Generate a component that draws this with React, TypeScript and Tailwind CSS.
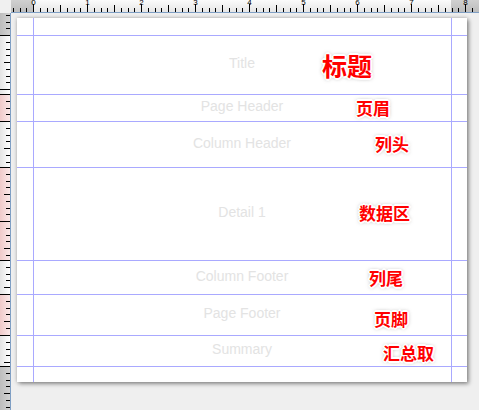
import React from "react";

const bands = [
  { name: "Title", h: 59 },
  { name: "Page Header", h: 27 },
  { name: "Column Header", h: 46 },
  { name: "Detail 1", h: 93 },
  { name: "Column Footer", h: 34 },
  { name: "Page Footer", h: 41 },
  { name: "Summary", h: 31 },
];

const notes = [
  { text: "标题", left: 322, top: 53, big: true },
  { text: "页眉", left: 356, top: 99 },
  { text: "列头", left: 375, top: 135 },
  { text: "数据区", left: 359, top: 204 },
  { text: "列尾", left: 369, top: 269 },
  { text: "页脚", left: 374, top: 310 },
  { text: "汇总取", left: 383, top: 344 },
];

const STEP = 6.75;

const TopRuler = () => {
  const ticks = [];
  for (let i = -3; i <= 66; i++) {
    const x = Math.round(33 + i * STEP) + 0.5;
    const y1 = i % 8 === 0 ? 4 : i % 4 === 0 ? 5 : 8;
    ticks.push(<line key={i} x1={x} x2={x} y1={y1} y2={12} stroke="#000" strokeWidth={1} />);
  }
  const nums = [0, 1, 2, 3, 4, 5, 6, 7, 8];
  return (
    <svg width={468} height={13} viewBox="11 0 468 13" className="block">
      <defs>
        <linearGradient id="rg" x1="0" y1="0" x2="0" y2="1">
          <stop offset="0" stopColor="#fbfbfb" />
          <stop offset="1" stopColor="#e6e6e6" />
        </linearGradient>
        <linearGradient id="rgg" x1="0" y1="0" x2="0" y2="1">
          <stop offset="0" stopColor="#d0d0d0" />
          <stop offset="1" stopColor="#bdbdbd" />
        </linearGradient>
      </defs>
      <rect x={11} y={0} width={468} height={12} fill="url(#rg)" />
      <rect x={11} y={0} width={22} height={12} fill="url(#rgg)" />
      <rect x={451} y={0} width={28} height={12} fill="url(#rgg)" />
      {ticks}
      {nums.map((n) => (
        <text key={n} x={33 + n * 54 + 0.5} y={5} fontSize={8} textAnchor="middle" fill="#000" fontFamily="Liberation Sans, sans-serif">
          {n}
        </text>
      ))}
      <line x1={11} x2={479} y1={12.5} y2={12.5} stroke="#7f9fc4" strokeWidth={1} />
    </svg>
  );
};

const LeftRuler = () => {
  const segs = [
    { y: 13, to: 35, kind: "gray", up: true },
    { y: 35, to: 94, kind: "white" },
    { y: 94, to: 121, kind: "pink" },
    { y: 121, to: 167, kind: "white" },
    { y: 167, to: 260, kind: "pink" },
    { y: 260, to: 294, kind: "white" },
    { y: 294, to: 335, kind: "pink" },
    { y: 335, to: 366, kind: "white" },
    { y: 366, to: 410, kind: "gray" },
  ];
  const fills: Record<string, string> = { gray: "url(#lgg)", white: "url(#lgw)", pink: "url(#lgp)" };
  const ticks: React.ReactNode[] = [];
  segs.forEach((s, si) => {
    if (s.up) {
      for (let i = 0; s.to - i * STEP > s.y; i++) {
        const y = Math.round(s.to - i * STEP) + 0.5;
        const x1 = i % 8 === 0 ? 0 : i % 4 === 0 ? 4 : 6;
        ticks.push(<line key={`u${i}`} x1={x1} x2={10} y1={y} y2={y} stroke="#000" />);
      }
      return;
    }
    for (let i = 0; s.y + i * STEP < s.to; i++) {
      const y = Math.round(s.y + i * STEP) + 0.5;
      const x1 = i % 8 === 0 ? 0 : i % 4 === 0 ? 4 : 6;
      ticks.push(<line key={`${si}-${i}`} x1={x1} x2={10} y1={y} y2={y} stroke="#000" />);
    }
  });
  return (
    <svg width={11} height={397} viewBox="0 13 11 397" className="block">
      <defs>
        <linearGradient id="lgg" x1="0" y1="0" x2="1" y2="0">
          <stop offset="0" stopColor="#bdbdbd" />
          <stop offset="1" stopColor="#d2d2d2" />
        </linearGradient>
        <linearGradient id="lgw" x1="0" y1="0" x2="1" y2="0">
          <stop offset="0" stopColor="#e4e4e4" />
          <stop offset="1" stopColor="#ffffff" />
        </linearGradient>
        <linearGradient id="lgp" x1="0" y1="0" x2="1" y2="0">
          <stop offset="0" stopColor="#efcaca" />
          <stop offset="1" stopColor="#fbe8e8" />
        </linearGradient>
      </defs>
      {segs.map((s, i) => (
        <rect key={i} x={0} y={s.y} width={10} height={s.to - s.y} fill={fills[s.kind]} />
      ))}
      {ticks}
      <line x1={10.5} x2={10.5} y1={13} y2={410} stroke="#7f9fc4" />
    </svg>
  );
};

export default function App() {
  return (
    <div className="relative w-[479px] h-[410px] overflow-hidden bg-[#efefef] font-['Liberation_Sans',sans-serif]">
      <div className="flex h-[13px]">
        <div className="w-[11px] h-[12px] bg-[#f0f0f0]" />
        <TopRuler />
      </div>
      <div className="flex">
        <LeftRuler />
        <div className="flex-1 pl-[6px] pt-[5px]">
          <div className="relative w-[450px] h-[364px] bg-white shadow-[0_0_4px_rgba(0,0,0,0.25),2px_2px_4px_rgba(0,0,0,0.35)]">
            <div className="h-[18px] border-b border-[#a9a9ff]" />
            {bands.map((b) => (
              <div
                key={b.name}
                className="flex items-center justify-center border-b border-[#a9a9ff] pb-[3px] text-[14px] text-[#e3e3e3]"
                style={{ height: b.h }}
              >
                {b.name}
              </div>
            ))}
            <div className="absolute top-0 bottom-0 left-[16px] w-px bg-[#a9a9ff]" />
            <div className="absolute top-0 bottom-0 left-[434px] w-px bg-[#a9a9ff]" />
          </div>
        </div>
      </div>
      {notes.map((n) => (
        <div
          key={n.text}
          className={`absolute font-['Noto_Sans_CJK_SC',sans-serif] font-bold leading-none text-[#ff0000] [text-shadow:1px_1px_0_#fff,-1px_-1px_0_#fff,1px_-1px_0_#fff,-1px_1px_0_#fff,2px_0_0_#fff,-2px_0_0_#fff,0_2px_0_#fff,0_-2px_0_#fff,0_0_4px_#666] ${n.big ? "text-[25px]" : "text-[17px]"}`}
          style={{ left: n.left, top: n.top }}
        >
          {n.text}
        </div>
      ))}
    </div>
  );
}
